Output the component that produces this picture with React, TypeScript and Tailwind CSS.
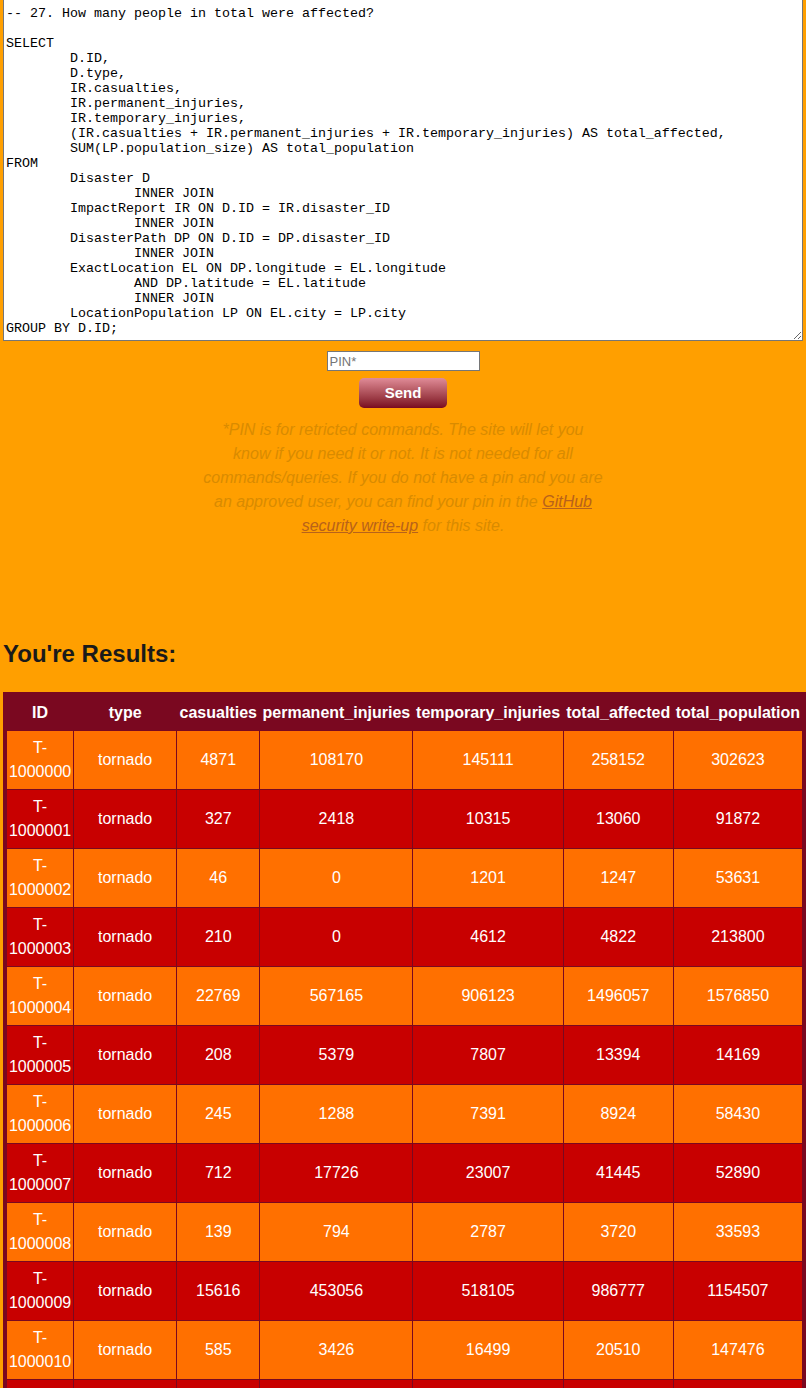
import { useState } from "react";

const QUERY = `-- 27. How many people in total were affected?

SELECT
\tD.ID,
\tD.type,
\tIR.casualties,
\tIR.permanent_injuries,
\tIR.temporary_injuries,
\t(IR.casualties + IR.permanent_injuries + IR.temporary_injuries) AS total_affected,
\tSUM(LP.population_size) AS total_population
FROM
\tDisaster D
\t\tINNER JOIN
\tImpactReport IR ON D.ID = IR.disaster_ID
\t\tINNER JOIN
\tDisasterPath DP ON D.ID = DP.disaster_ID
\t\tINNER JOIN
\tExactLocation EL ON DP.longitude = EL.longitude
\t\tAND DP.latitude = EL.latitude
\t\tINNER JOIN
\tLocationPopulation LP ON EL.city = LP.city
GROUP BY D.ID;`;

const COLUMNS = [
  { key: "ID", width: 67 },
  { key: "type", width: 103 },
  { key: "casualties", width: 83 },
  { key: "permanent_injuries", width: 153 },
  { key: "temporary_injuries", width: 150 },
  { key: "total_affected", width: 110 },
  { key: "total_population", width: 129 },
];

type Row = [string, string, number, number, number, number, number];

const ROWS: Row[] = [
  ["T-1000000", "tornado", 4871, 108170, 145111, 258152, 302623],
  ["T-1000001", "tornado", 327, 2418, 10315, 13060, 91872],
  ["T-1000002", "tornado", 46, 0, 1201, 1247, 53631],
  ["T-1000003", "tornado", 210, 0, 4612, 4822, 213800],
  ["T-1000004", "tornado", 22769, 567165, 906123, 1496057, 1576850],
  ["T-1000005", "tornado", 208, 5379, 7807, 13394, 14169],
  ["T-1000006", "tornado", 245, 1288, 7391, 8924, 58430],
  ["T-1000007", "tornado", 712, 17726, 23007, 41445, 52890],
  ["T-1000008", "tornado", 139, 794, 2787, 3720, 33593],
  ["T-1000009", "tornado", 15616, 453056, 518105, 986777, 1154507],
  ["T-1000010", "tornado", 585, 3426, 16499, 20510, 147476],
  ["T-1000011", "tornado", 1043, 20871, 33152, 55066, 89310],
];

export default function App() {
  const [pin, setPin] = useState("");

  return (
    <div className="min-h-[1388px] bg-[#ff9f00] px-[3px] font-['Liberation_Sans',Arial,sans-serif] text-[16px]">
      <textarea
        defaultValue={QUERY}
        spellCheck={false}
        className="block h-[341px] w-[800px] border border-t-0 border-[#767676] bg-white px-[2px] pt-[6px] pb-[2px] font-['Liberation_Mono','Courier_New',monospace] text-[13.33px] leading-[15px] text-black [tab-size:8] outline-none"
      />

      <div className="flex flex-col items-center">
        <input
          value={pin}
          onChange={(e) => setPin(e.target.value)}
          placeholder="PIN*"
          className="mt-[10px] h-[20px] w-[153px] border border-[#767676] bg-white px-[2px] text-[13px] text-black placeholder:text-[#757575] outline-none"
        />
        <button className="mt-[7px] h-[30px] w-[88px] rounded-[5px] bg-linear-to-b from-[#e08c98] to-[#7a0820] text-[15px] font-bold text-white">
          Send
        </button>
        <p className="mt-[10px] w-[401px] text-center text-[16px] leading-6 italic text-[#d98b00]">
          *PIN is for retricted commands. The site will let you know if you
          need it or not. It is not needed for all commands/queries. If you do
          not have a pin and you are an approved user, you can find your pin in
          the{" "}
          <a href="#" className="text-[#b8621a] underline">
            GitHub security write-up
          </a>{" "}
          for this site.
        </p>
      </div>

      <h2 className="mt-[102px] text-[24px] leading-[28px] font-bold text-[#1a1a1a]">
        You&apos;re Results:
      </h2>

      <div className="mt-[24px] w-[803px] bg-[#7a0820] p-[3px]">
        <table className="w-[797px] table-fixed border-collapse text-center text-white">
          <colgroup>
            {COLUMNS.map((c) => (
              <col key={c.key} style={{ width: c.width }} />
            ))}
          </colgroup>
          <thead>
            <tr>
              {COLUMNS.map((c) => (
                <th
                  key={c.key}
                  className="border border-[#7a0820] px-[1px] py-[5px] leading-6 font-bold"
                >
                  {c.key}
                </th>
              ))}
            </tr>
          </thead>
          <tbody>
            {ROWS.map((row, i) => (
              <tr
                key={row[0]}
                className={i % 2 === 0 ? "bg-[#ff7000]" : "bg-[#c80000]"}
              >
                {row.map((cell, j) => (
                  <td
                    key={j}
                    className="border border-[#7a0820] px-[1px] py-[5px] leading-6"
                  >
                    {cell}
                  </td>
                ))}
              </tr>
            ))}
          </tbody>
        </table>
      </div>
    </div>
  );
}
